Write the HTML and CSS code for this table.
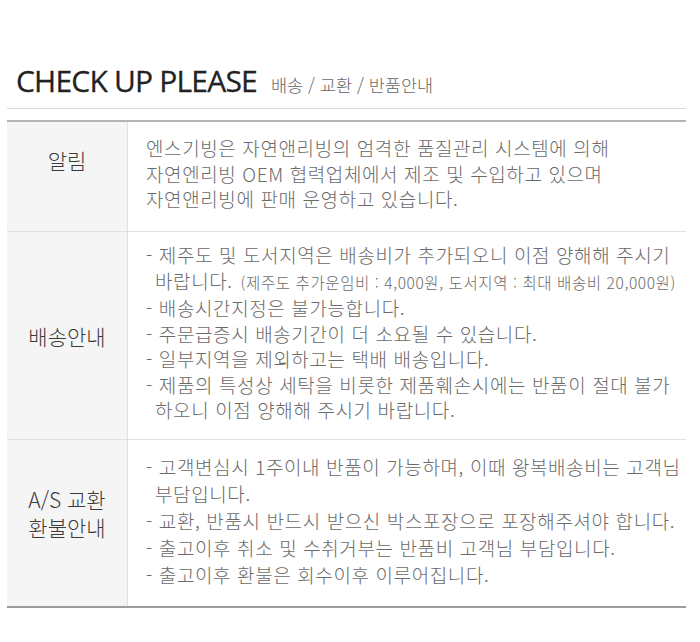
FILE: index.html
```html
<!DOCTYPE html>
<html lang="ko">
<head>
<meta charset="utf-8">
<link rel="stylesheet" href="styles.css">
</head>
<body>
<div class="page">
  <div class="header">
    <h1 class="title">CHECK UP PLEASE</h1>
    <span class="subtitle">배송 / 교환 / 반품안내</span>
  </div>
  <div class="info">
    <div class="row row-notice">
      <div class="label label-notice">알림</div>
      <div class="content">
        <p>엔스기빙은 자연앤리빙의 엄격한 품질관리 시스템에 의해</p>
        <p>자연엔리빙 OEM 협력업체에서 제조 및 수입하고 있으며</p>
        <p>자연앤리빙에 판매 운영하고 있습니다.</p>
      </div>
    </div>
    <div class="row row-ship">
      <div class="label">배송안내</div>
      <div class="content">
        <p class="item">- 제주도 및 도서지역은 배송비가 추가되오니 이점 양해해 주시기</p>
        <p class="cont">바랍니다. <span class="small">(제주도 추가운임비 : 4,000원, 도서지역 : 최대 배송비 20,000원)</span></p>
        <p class="item">- 배송시간지정은 불가능합니다.</p>
        <p class="item">- 주문급증시 배송기간이 더 소요될 수 있습니다.</p>
        <p class="item">- 일부지역을 제외하고는 택배 배송입니다.</p>
        <p class="item">- 제품의 특성상 세탁을 비롯한 제품훼손시에는 반품이 절대 불가</p>
        <p class="cont">하오니 이점 양해해 주시기 바랍니다.</p>
      </div>
    </div>
    <div class="row row-as">
      <div class="label label-as">A/S 교환<br>환불안내</div>
      <div class="content content-as">
        <p class="item">- 고객변심시 1주이내 반품이 가능하며, 이때 왕복배송비는 고객님</p>
        <p class="cont">부담입니다.</p>
        <p class="item">- 교환, 반품시 반드시 받으신 박스포장으로 포장해주셔야 합니다.</p>
        <p class="item">- 출고이후 취소 및 수취거부는 반품비 고객님 부담입니다.</p>
        <p class="item">- 출고이후 환불은 회수이후 이루어집니다.</p>
      </div>
    </div>
  </div>
</div>
</body>
</html>
```

FILE: styles.css
```css
* { box-sizing: border-box; }
html, body { margin: 0; padding: 0; background: #fff; }
body {
  font-family: "Noto Sans CJK KR", "Noto Sans", sans-serif;
  color: #6a6a6a;
}
.page {
  padding: 62px 7px 0 7px;
  width: 693px;
}
.header {
  display: flex;
  align-items: baseline;
  padding: 0 0 8px 9px;
  border-bottom: 1px solid #dcdcdc;
  height: 47px;
}
.title {
  margin: 0;
  font-family: "Open Sans", "Noto Sans", sans-serif;
  font-weight: 400;
  font-size: 30px;
  line-height: 38px;
  color: #222;
  letter-spacing: -0.8px;
  -webkit-text-stroke: 0.3px #222;
}
.subtitle {
  margin-left: 14px;
  font-size: 17.5px;
  font-weight: 300;
  color: #666;
}
.info {
  margin-top: 11px;
  border-top: 2px solid #b4b4b4;
  border-bottom: 2px solid #9c9c9c;
}
.row {
  display: grid;
  grid-template-columns: 121px 1fr;
  border-bottom: 1px solid #e0e0e0;
}
.row:last-child { border-bottom: none; }
.row-notice { height: 110px; }
.row-ship { height: 208px; }
.row-as { height: 166px; }
.label {
  background: #f5f5f5;
  border-right: 1px solid #e0e0e0;
  display: flex;
  align-items: center;
  justify-content: center;
  text-align: center;
  font-size: 21px;
  font-weight: 300;
  line-height: 28px;
  color: #3a3a3a;
}
.label-notice { padding-bottom: 34px; }
.label-as { padding-bottom: 20px; }
.content {
  display: flex;
  flex-direction: column;
  justify-content: center;
  padding: 0 4px 6px 18px;
  font-size: 19px;
  font-weight: 300;
  line-height: 25.5px;
  letter-spacing: 0.6px;
}
.content-as { line-height: 27px; }
.content p { margin: 0; white-space: nowrap; }
.cont { padding-left: 9px; }
.small { margin-left: 2px; font-size: 15.5px; letter-spacing: 0.6px; }
```
